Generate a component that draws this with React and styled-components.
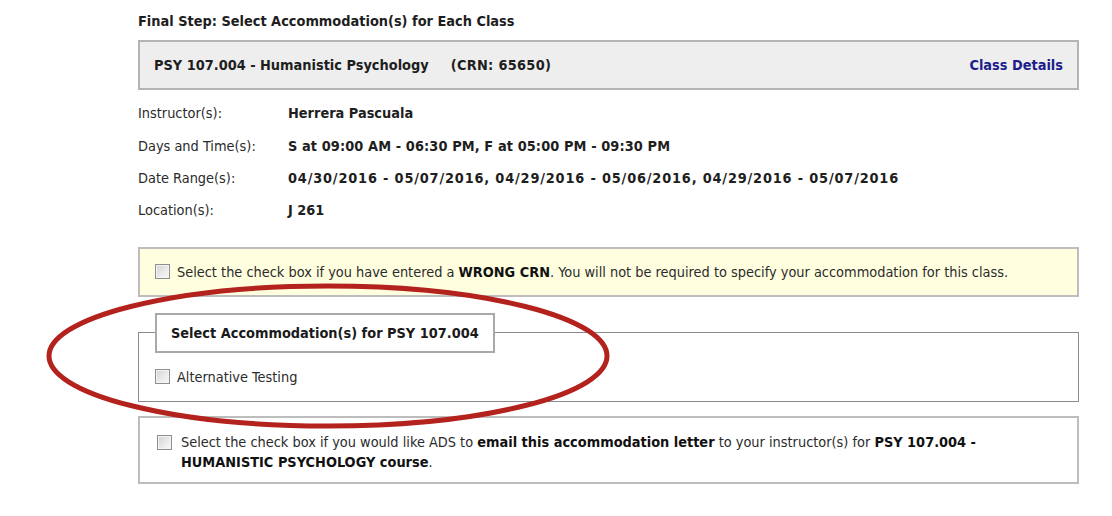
import React from "react"
import styled, { createGlobalStyle } from "styled-components"

const GlobalStyle = createGlobalStyle`
  html, body {
    margin: 0;
    padding: 0;
    background: #fff;
  }
  body {
    font-family: "DejaVu Sans Condensed", "DejaVu Sans", Tahoma, sans-serif;
    font-size: 14.4px;
    color: #1e1e1e;
  }
`

const Page = styled.div`
  position: relative;
  width: 941px;
  margin-left: 138px;
  padding-top: 12px;
`

const Heading = styled.div`
  font-weight: bold;
  line-height: 18px;
`

const ClassHeader = styled.div`
  display: flex;
  align-items: center;
  justify-content: space-between;
  height: 46px;
  margin-top: 10px;
  padding: 0 14px 0 14px;
  background: #eeeeee;
  border: 2px solid #b4b4b4;
  font-weight: bold;
`

const Crn = styled.span`
  margin-left: 22px;
  letter-spacing: 0.3px;
`

const DetailsLink = styled.a`
  color: #1d1d8c;
  text-decoration: none;
  font-weight: bold;
`

const InfoTable = styled.div`
  display: grid;
  grid-template-columns: 150px 1fr;
  grid-auto-rows: 32.4px;
  align-items: center;
  margin-top: 7px;
`

const Label = styled.div`
  color: #2a2a2a;
`

const Value = styled.div`
  font-weight: bold;
  letter-spacing: ${(p) => p.$spacing || 0}px;
`

const Notice = styled.div`
  display: flex;
  align-items: center;
  gap: 7px;
  height: 46px;
  margin-top: 20px;
  padding: 0 15px;
  background: ${(p) => (p.$tone === "warn" ? "#ffffe0" : "#fff")};
  border: 2px solid #bdbdbd;
  color: #2b2b2b;

  b {
    color: #111;
  }
`

const Box = styled.input.attrs({ type: "checkbox" })`
  appearance: none;
  flex: none;
  width: 15px;
  height: 15px;
  margin: 0;
  border: 1px solid #8e8e8e;
  background: linear-gradient(135deg, #d2d2d2 0%, #ececec 60%, #f8f8f8 100%);
  box-shadow: inset 0 0 0 1px #f4f4f4;
`

const Group = styled.fieldset`
  margin: 16px 0 0 0;
  padding: 16px 16px 16px 16px;
  border: 1px solid #8a8a8a;
  min-width: 0;
`

const Legend = styled.legend`
  margin: 0;
  padding: 0 14px;
  height: 36px;
  line-height: 36px;
  border: 2px solid #a9a9a9;
  background: #fff;
  font-weight: bold;
  color: #1a1a1a;
`

const OptionRow = styled.label`
  display: flex;
  align-items: center;
  gap: 7px;
  color: #2b2b2b;
`

const EmailBox = styled.div`
  display: flex;
  align-items: flex-start;
  gap: 9px;
  margin-top: 14px;
  padding: 14px 17px 10px 17px;
  border: 2px solid #bdbdbd;
  line-height: 20px;
  color: #2b2b2b;

  ${Box} {
    margin-top: 3px;
  }

  b {
    color: #111;
  }
`

const Annotation = styled.svg`
  position: absolute;
  left: -138px;
  top: 0;
  pointer-events: none;
`

const rows = [
  { label: "Instructor(s):", value: "Herrera Pascuala" },
  { label: "Days and Time(s):", value: "S at 09:00 AM - 06:30 PM, F at 05:00 PM - 09:30 PM", spacing: 0.1 },
  {
    label: "Date Range(s):",
    value: "04/30/2016 - 05/07/2016, 04/29/2016 - 05/06/2016, 04/29/2016 - 05/07/2016",
    spacing: 0.82,
  },
  { label: "Location(s):", value: "J 261" },
]

export default function App() {
  return (
    <>
      <GlobalStyle />
      <Page>
        <Heading>Final Step: Select Accommodation(s) for Each Class</Heading>

        <ClassHeader>
          <span>
            PSY 107.004 - Humanistic Psychology<Crn>(CRN: 65650)</Crn>
          </span>
          <DetailsLink href="#">Class Details</DetailsLink>
        </ClassHeader>

        <InfoTable>
          {rows.map((row) => (
            <React.Fragment key={row.label}>
              <Label>{row.label}</Label>
              <Value $spacing={row.spacing}>{row.value}</Value>
            </React.Fragment>
          ))}
        </InfoTable>

        <Notice $tone="warn">
          <Box />
          <span>
            Select the check box if you have entered a <b>WRONG CRN</b>. You will not be required to
            specify your accommodation for this class.
          </span>
        </Notice>

        <Group>
          <Legend>Select Accommodation(s) for PSY 107.004</Legend>
          <OptionRow>
            <Box />
            Alternative Testing
          </OptionRow>
        </Group>

        <EmailBox>
          <Box />
          <span>
            Select the check box if you would like ADS to <b>email this accommodation letter</b> to
            your instructor(s) for <b>PSY 107.004 -</b>
            <br />
            <b>HUMANISTIC PSYCHOLOGY course</b>.
          </span>
        </EmailBox>

        <Annotation width="700" height="516" viewBox="0 0 700 516">
          <ellipse
            cx="328"
            cy="356"
            rx="279"
            ry="70"
            fill="none"
            stroke="#b3221d"
            strokeWidth="5"
          />
        </Annotation>
      </Page>
    </>
  )
}
